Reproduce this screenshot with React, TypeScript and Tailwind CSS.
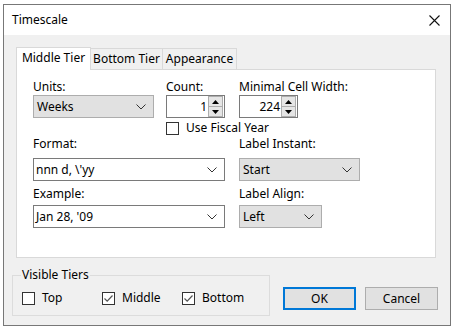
import React from 'react';

const font = { fontFamily: '"Segoe UI", "Noto Sans", Arial, sans-serif' };

const Chevron: React.FC = () => (
  <svg width="10" height="6" viewBox="0 0 10 6" className="shrink-0">
    <path d="M0.5 0.5 L5 5 L9.5 0.5" fill="none" stroke="#333" strokeWidth="1" />
  </svg>
);

const Select: React.FC<{ value: string; w: string }> = ({ value, w }) => (
  <div className={`${w} h-[23px] flex items-center justify-between pl-[3px] pr-[7px] bg-[#e1e1e1] border border-[#adadad] text-black`}>
    <span>{value}</span>
    <Chevron />
  </div>
);

const Combo: React.FC<{ value: string }> = ({ value }) => (
  <div className="w-[192px] h-[23px] flex items-center justify-between pl-[2px] pr-[7px] bg-white border border-[#7a7a7a] text-black">
    <span>{value}</span>
    <Chevron />
  </div>
);

const Spin: React.FC<{ value: string }> = ({ value }) => (
  <div className="w-[59px] h-[23px] flex items-center bg-white border border-[#7a7a7a]">
    <span className="flex-1 text-right pr-[1px]">{value}</span>
    <div className="w-[15px] h-[21px] flex flex-col mr-[1px]">
      <div className="flex-1 flex items-center justify-center bg-[#e5e5e5] border border-[#adadad]">
        <svg width="7" height="4" viewBox="0 0 7 4"><path d="M0 4 L3.5 0 L7 4 Z" fill="#000" /></svg>
      </div>
      <div className="flex-1 flex items-center justify-center bg-[#e5e5e5] border border-t-0 border-[#adadad]">
        <svg width="7" height="4" viewBox="0 0 7 4"><path d="M0 0 L3.5 4 L7 0 Z" fill="#000" /></svg>
      </div>
    </div>
  </div>
);

const Check: React.FC<{ label: string; checked?: boolean; w?: string }> = ({ label, checked, w }) => (
  <div className={`flex items-center gap-[7px] ${w ?? ''}`}>
    <div className="w-[13px] h-[13px] border border-[#333] bg-white flex items-center justify-center">
      {checked && (
        <svg width="11" height="11" viewBox="0 0 11 11">
          <path d="M1.5 5.5 L4.2 8.2 L9.5 2.5" fill="none" stroke="#555" strokeWidth="1.2" />
        </svg>
      )}
    </div>
    <span>{label}</span>
  </div>
);

export default function App() {
  return (
    <div className="w-[455px] h-[331px] bg-white pt-[4px] pl-[3px] text-[12px] text-black" style={font}>
      <div className="w-[448px] h-[322px] border border-[#777] bg-[#f0f0f0] flex flex-col">
        <div className="h-[30px] bg-white flex items-center justify-between pl-[8px] pr-[10px]">
          <span>Timescale</span>
          <svg width="11" height="11" viewBox="0 0 11 11">
            <path d="M0.5 0.5 L10.5 10.5 M10.5 0.5 L0.5 10.5" stroke="#111" strokeWidth="1.1" />
          </svg>
        </div>

        <div className="pl-[12px] pt-[11px]">
          <div className="flex items-end h-[23px]">
            <div className="w-[75px] h-[23px] bg-white border border-b-0 border-[#d9d9d9] flex items-center justify-center relative z-10 -mb-px pb-[2px]">
              Middle Tier
            </div>
            <div className="w-[72px] h-[21px] border border-l-0 border-b-0 border-[#d9d9d9] flex items-center justify-center">
              Bottom Tier
            </div>
            <div className="w-[74px] h-[21px] border border-l-0 border-b-0 border-[#d9d9d9] flex items-center justify-center">
              Appearance
            </div>
          </div>
          <div className="w-[420px] h-[189px] bg-white border border-[#d9d9d9] pl-[16px] pt-[9px]">
            <div className="flex">
              <div className="w-[133px]">
                <div className="h-[16px] leading-[16px]">Units:</div>
                <Select value="Weeks" w="w-[121px]" />
              </div>
              <div className="w-[73px]">
                <div className="h-[16px] leading-[16px]">Count:</div>
                <Spin value="1" />
              </div>
              <div>
                <div className="h-[16px] leading-[16px]">Minimal Cell Width:</div>
                <Spin value="224" />
              </div>
            </div>
            <div className="ml-[133px] mt-[1px] h-[14px]">
              <Check label="Use Fiscal Year" />
            </div>
            <div className="flex mt-[3px]">
              <div className="w-[206px]">
                <div className="h-[16px] leading-[16px] mb-[6px]">Format:</div>
                <Combo value="nnn d, \'yy" />
                <div className="h-[16px] leading-[16px] mt-[5px] mb-[3px]">Example:</div>
                <Combo value="Jan 28, '09" />
              </div>
              <div>
                <div className="h-[16px] leading-[16px] mb-[6px]">Label Instant:</div>
                <Select value="Start" w="w-[121px]" />
                <div className="h-[16px] leading-[16px] mt-[5px] mb-[3px]">Label Align:</div>
                <Select value="Left" w="w-[83px]" />
              </div>
            </div>
          </div>
        </div>

        <div className="flex items-end pl-[8px] pt-[9px]">
          <fieldset className="w-[258px] h-[49px] border border-[#dcdcdc] pl-[9px] pr-0 pt-[6px] m-0">
            <legend className="px-[1px] -ml-[1px] leading-[16px]">Visible Tiers</legend>
            <div className="flex">
              <Check label="Top" w="w-[80px]" />
              <Check label="Middle" checked w="w-[80px]" />
              <Check label="Bottom" checked />
            </div>
          </fieldset>
          <div className="flex gap-[9px] ml-[13px] mb-[6px]">
            <div className="w-[73px] h-[23px] border-2 border-[#0078d7] bg-[#e1e1e1] flex items-center justify-center">OK</div>
            <div className="w-[73px] h-[23px] border border-[#adadad] bg-[#e1e1e1] flex items-center justify-center">Cancel</div>
          </div>
        </div>
      </div>
    </div>
  );
}
